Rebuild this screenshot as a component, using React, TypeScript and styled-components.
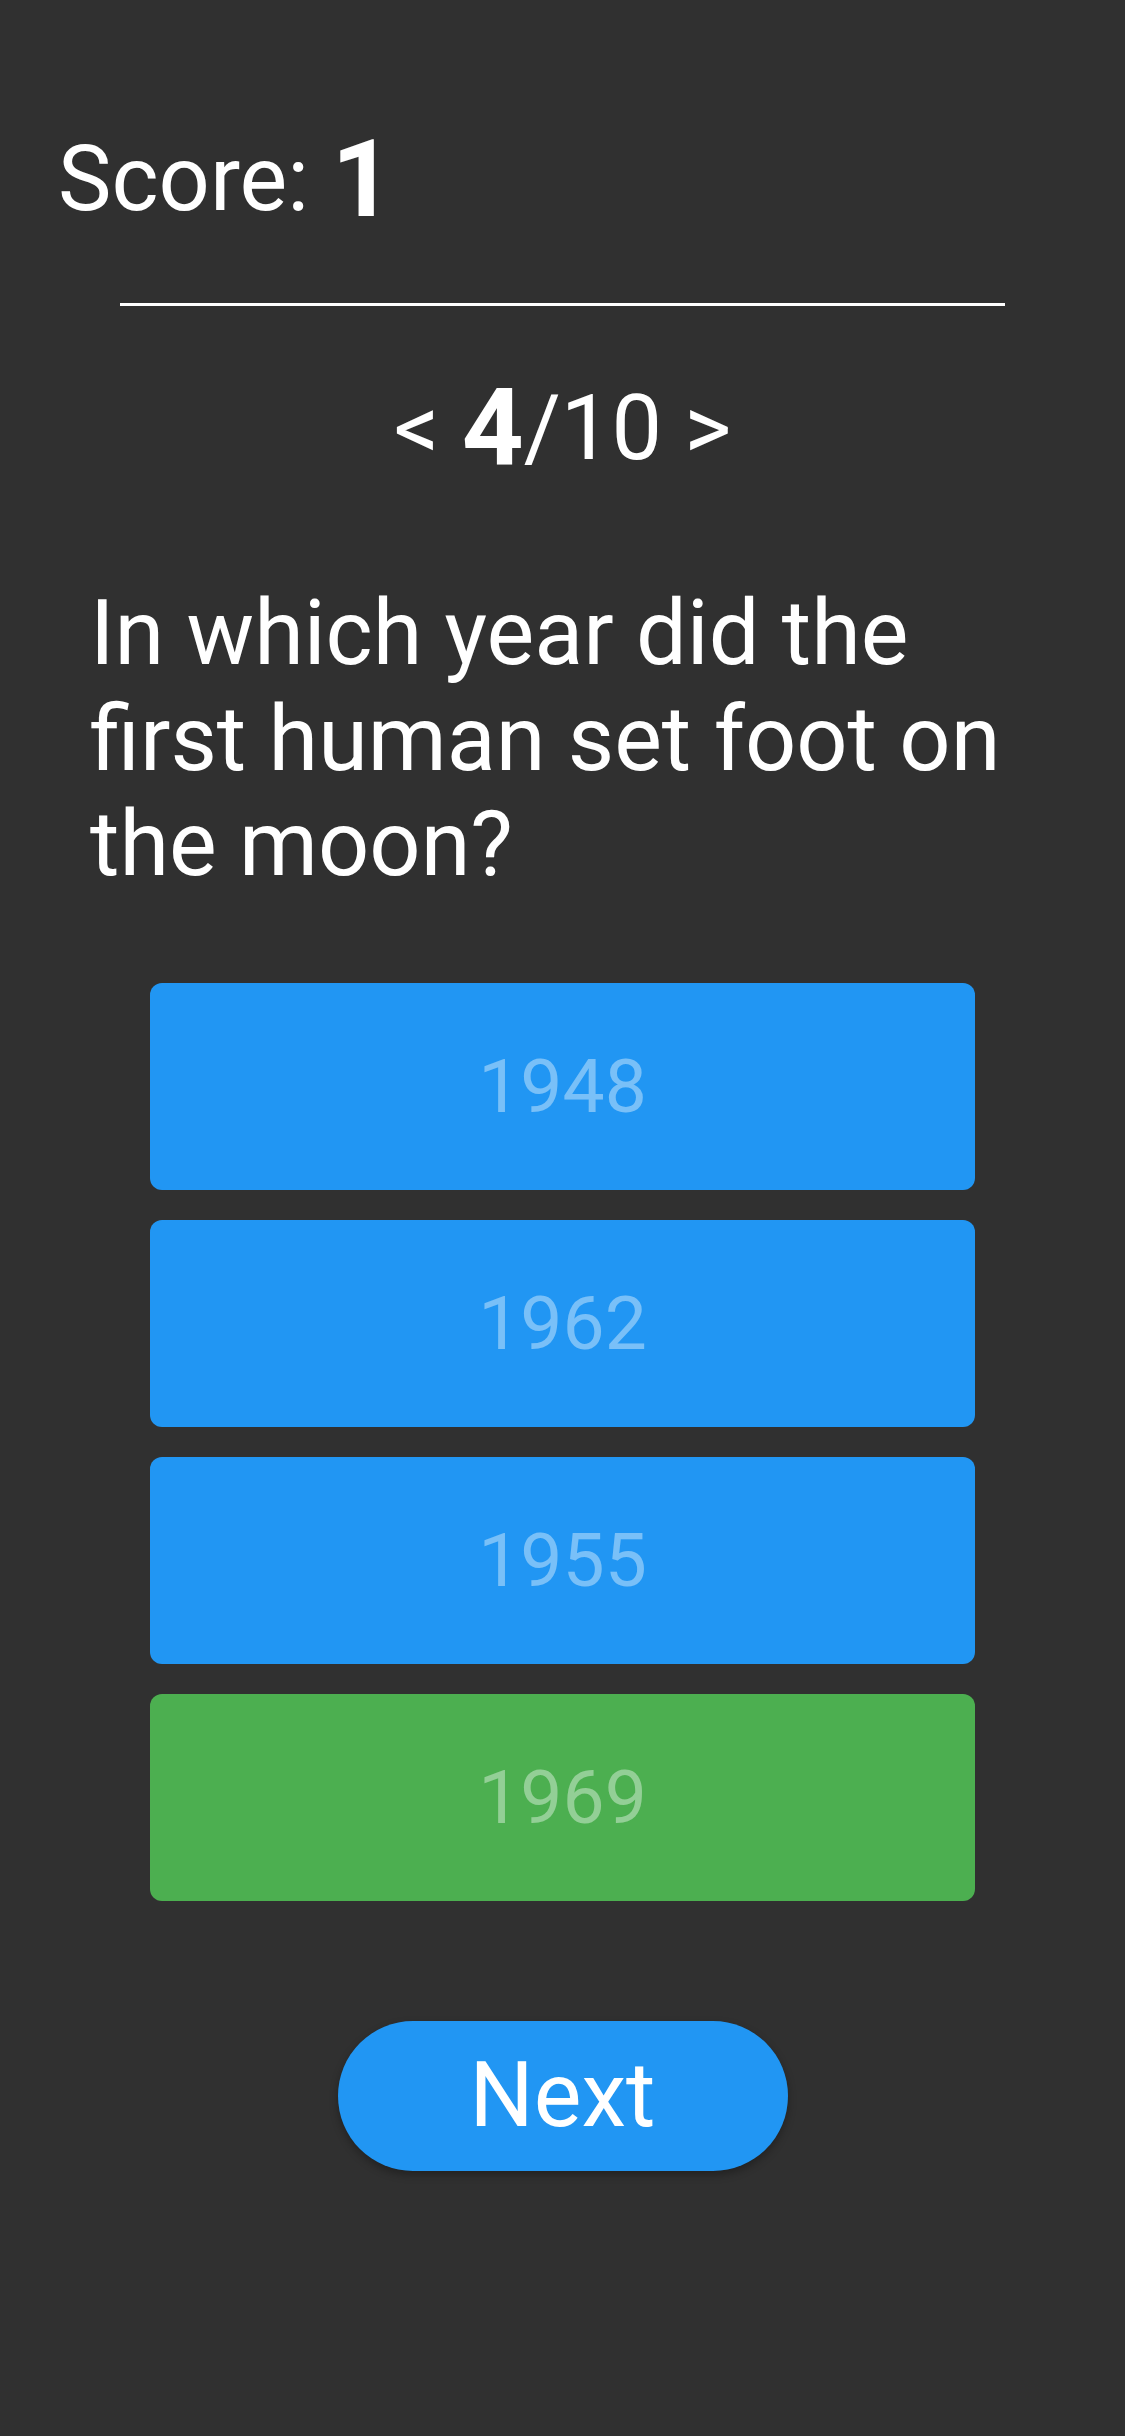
import styled, { createGlobalStyle } from 'styled-components';

const GlobalStyle = createGlobalStyle`
  html, body {
    margin: 0;
    padding: 0;
    background-color: #303030;
  }
  body {
    font-family: Roboto, 'Liberation Sans', sans-serif;
    color: #ffffff;
  }
`;

const Screen = styled.div`
  min-height: 2436px;
  padding-top: 116px;
  box-sizing: border-box;
  display: flex;
  flex-direction: column;
  background-color: #303030;
`;

const ScoreRow = styled.div`
  display: flex;
  align-items: center;
  height: 127px;
  padding: 0 58px;
`;

const ScoreLabel = styled.span`
  font-size: 90px;
  line-height: 105px;
  white-space: pre;
`;

const BigNumber = styled.span`
  font-size: 108px;
  line-height: 127px;
  font-weight: 700;
`;

const Divider = styled.div`
  margin: 60px 120px 0;
  height: 3px;
  background-color: #ffffff;
`;

const Pager = styled.div`
  display: flex;
  justify-content: center;
  align-items: center;
  height: 127px;
  margin-top: 59px;
`;

const PagerText = styled.span`
  font-size: 90px;
  line-height: 105px;
  white-space: pre;
`;

const Question = styled.p`
  margin: 89px 0 0;
  padding: 0 88px 0 90px;
  font-size: 90px;
  line-height: 105.5px;
  font-weight: 400;
`;

const AnswerList = styled.div`
  display: flex;
  flex-direction: column;
  gap: 30px;
  margin-top: 85px;
  padding: 0 150px;
`;

const Answer = styled.div<{ $correct?: boolean }>`
  height: 207px;
  border-radius: 12px;
  background-color: ${(p) => (p.$correct ? '#4caf50' : '#2196f3')};
  color: rgba(255, 255, 255, 0.4);
  font-size: 75px;
  display: flex;
  align-items: center;
  justify-content: center;
`;

const NextButton = styled.button`
  margin: 120px auto 0;
  width: 450px;
  height: 150px;
  border: none;
  border-radius: 75px;
  background-color: #2196f3;
  color: #ffffff;
  font-family: Roboto, 'Liberation Sans', sans-serif;
  font-size: 90px;
  line-height: 105px;
  padding: 0;
  box-shadow: 0 4px 8px rgba(0, 0, 0, 0.3);
`;

const answers = [
  { label: '1948', correct: false },
  { label: '1962', correct: false },
  { label: '1955', correct: false },
  { label: '1969', correct: true },
];

const App = () => {
  return (
    <>
      <GlobalStyle />
      <Screen>
        <ScoreRow>
          <ScoreLabel>Score: </ScoreLabel>
          <BigNumber>1</BigNumber>
        </ScoreRow>
        <Divider />
        <Pager>
          <PagerText>{'< '}</PagerText>
          <BigNumber>4</BigNumber>
          <PagerText>{'/10 >'}</PagerText>
        </Pager>
        <Question>In which year did the first human set foot on the moon?</Question>
        <AnswerList>
          {answers.map((a) => (
            <Answer key={a.label} $correct={a.correct}>
              {a.label}
            </Answer>
          ))}
        </AnswerList>
        <NextButton>Next</NextButton>
      </Screen>
    </>
  );
};

export default App;
